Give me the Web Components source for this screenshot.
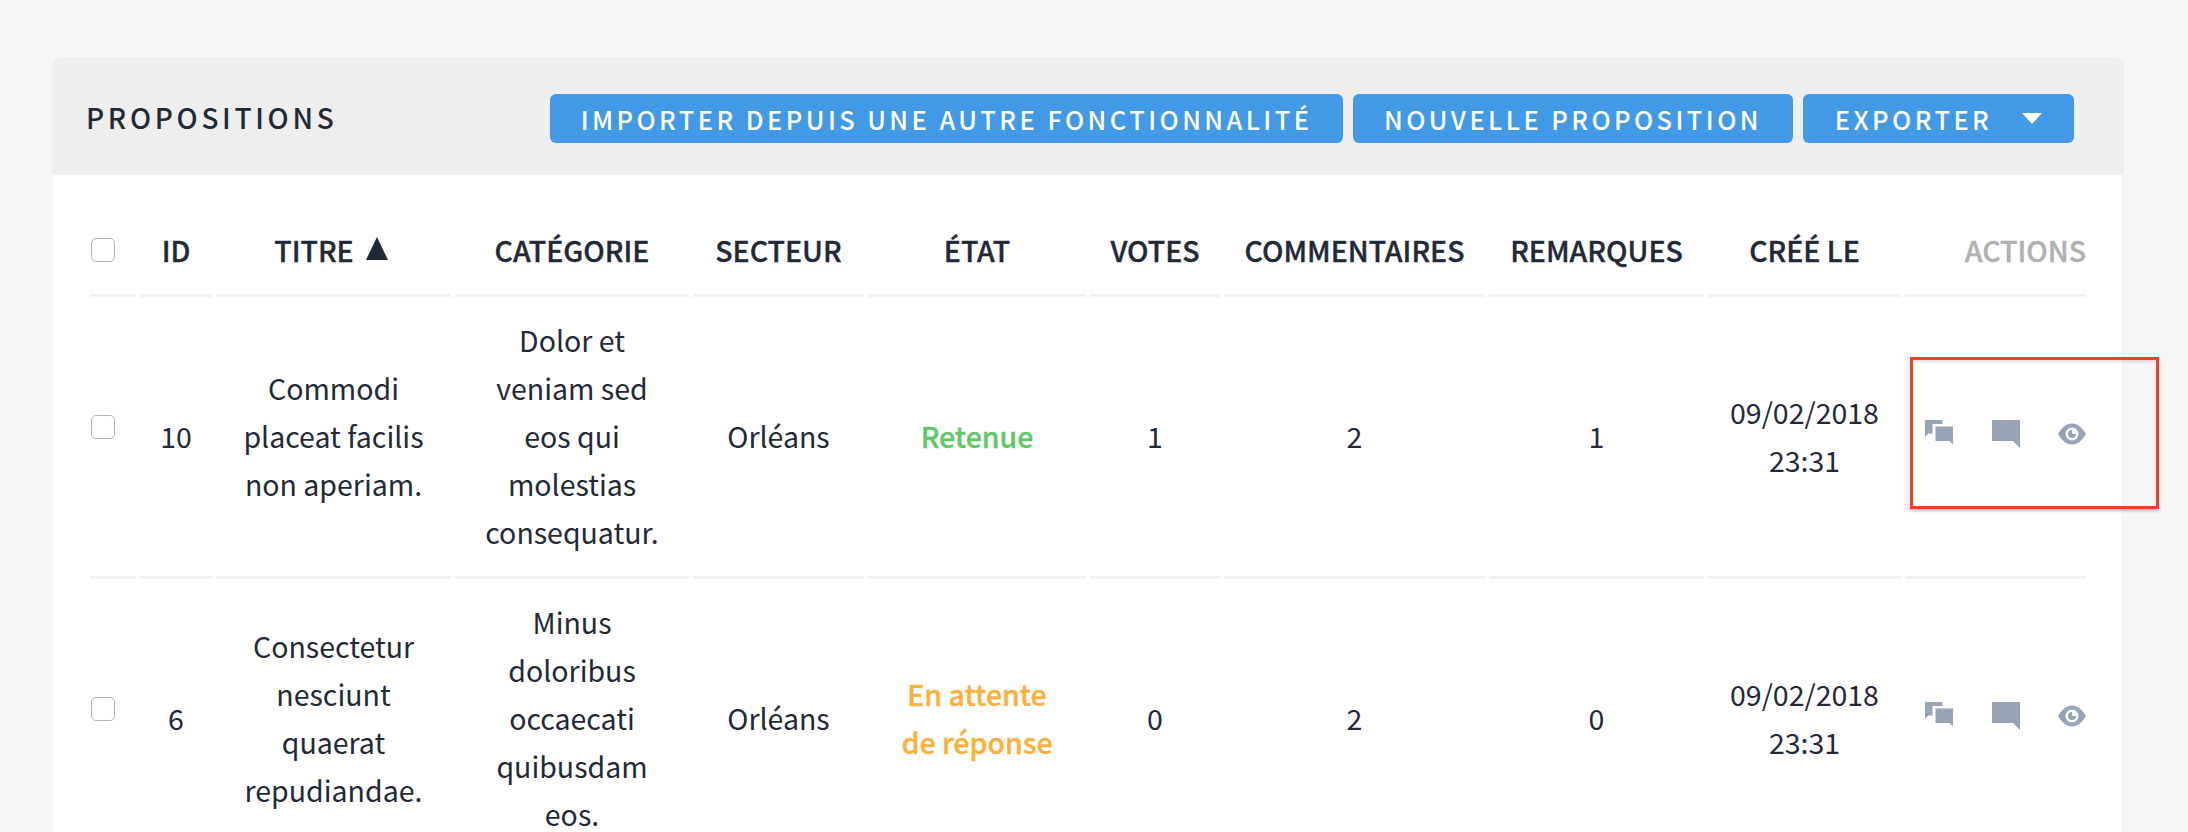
<!doctype html>
<html lang="fr">
<head>
<meta charset="utf-8">
<title>Propositions</title>
<style>
  html, body { margin: 0; height: 832px; overflow: hidden; background: #f6f6f6; }
  body { font-family: "Noto Sans CJK SC", "Source Sans Pro", "Noto Sans", sans-serif; color: #1f2937; }
</style>
</head>
<body>
<x-page>
  <x-card>
    <span slot="title">Propositions</span>
    <x-button slot="actions" style="width:793px">Importer depuis une autre fonctionnalité</x-button>
    <x-button slot="actions" style="width:440px">Nouvelle proposition</x-button>
    <x-button slot="actions" style="width:271px" caret>Exporter</x-button>
    <x-proposals-table></x-proposals-table>
  </x-card>
  <x-callout></x-callout>
</x-page>

<script>
class XPage extends HTMLElement {
  constructor() {
    super();
    this.attachShadow({ mode: 'open' }).innerHTML = `
      <style>
        :host { display: block; position: relative; height: 832px; padding: 58px 66px 0 53px; box-sizing: border-box; overflow: hidden; }
      </style>
      <slot></slot>`;
  }
}

class XCard extends HTMLElement {
  constructor() {
    super();
    this.attachShadow({ mode: 'open' }).innerHTML = `
      <style>
        :host { display: block; background: #fff; border-radius: 6px 6px 0 0; box-shadow: 0 0 0 1px #f2f2f2; height: 900px; }
        header { display: flex; align-items: center; justify-content: space-between; height: 117px; box-sizing: border-box;
                 background: #eee; border-radius: 6px 6px 0 0; padding: 4px 50px 0 33px; margin: 0 -2px 0 0; }
        h2 { margin: 0; font-size: 28px; line-height: 40px; font-weight: 500; letter-spacing: 3.7px; text-transform: uppercase; color: #1f2937; position: relative; top: -2px; }
        .actions { display: flex; gap: 10px; }
        main { padding: 20px 36px 0 37px; }
      </style>
      <header><h2><slot name="title"></slot></h2><div class="actions"><slot name="actions"></slot></div></header>
      <main><slot></slot></main>`;
  }
}

class XButton extends HTMLElement {
  constructor() {
    super();
    this.attachShadow({ mode: 'open' }).innerHTML = `
      <style>
        :host { display: flex; align-items: center; justify-content: center; height: 49px; box-sizing: border-box;
                background: #4299e6; color: #fff; border-radius: 6px; font-size: 25.5px; font-weight: 500; letter-spacing: 3.42px; text-transform: uppercase; white-space: nowrap; }
        .caret { display: none; width: 0; height: 0; margin-left: 30px; border: 10.5px solid transparent; border-top: 11px solid #fff; border-bottom: 0; }
        :host([caret]) .caret { display: block; }
      </style>
      <slot></slot><span class="caret"></span>`;
  }
}

class XIcon extends HTMLElement {
  connectedCallback() {
    const paths = {
      chats: '<path d="M0 0H17.500V4H7.500V13.500H3.500L0 17Z"/><path d="M10.500 6.500H28V24.500L24.500 21H10.500Z"/>',
      chat: '<path d="M0 0H28V28L21 21H0Z"/>',
      eye: '<path fill-rule="evenodd" d="M0 14C4 7.500 8.500 3.500 14 3.500S24 7.500 28 14C24 20.500 19.500 24.500 14 24.500S4 20.500 0 14ZM14 7.500A6.500 6.500 0 1 0 14 20.500A6.500 6.500 0 1 0 14 7.500Z"/><path fill-rule="evenodd" d="M14 10A4 4 0 1 0 18 14H15.500A1.500 1.500 0 0 1 14 12.500Z"/>'
    };
    const name = this.getAttribute('name');
    this.attachShadow({ mode: 'open' }).innerHTML = `
      <style>:host { display: block; width: 28px; height: 28px; } svg { display: block; fill: #98a4b5; }</style>
      <svg width="28" height="28" viewBox="0 0 28 28">${paths[name]}</svg>`;
  }
}

class XCheckbox extends HTMLElement {
  constructor() {
    super();
    this.attachShadow({ mode: 'open' }).innerHTML = `
      <style>:host { display: block; width: 24px; height: 24px; box-sizing: border-box; background: #fff; border: 1.5px solid #b4b4b4; border-radius: 5px; margin-left: 1px; }</style>`;
  }
}

class XProposalsTable extends HTMLElement {
  connectedCallback() {
    const rows = [
      { id: '10', title: ['Commodi', 'placeat facilis', 'non aperiam.'], cat: ['Dolor et', 'veniam sed', 'eos qui', 'molestias', 'consequatur.'],
        state: ['Retenue'], tone: 'ok', votes: 1, comments: 2, notes: 1 },
      { id: '6', title: ['Consectetur', 'nesciunt', 'quaerat', 'repudiandae.'], cat: ['Minus', 'doloribus', 'occaecati', 'quibusdam', 'eos.'],
        state: ['En attente', 'de réponse'], tone: 'wait', votes: 0, comments: 2, notes: 0 }
    ];
    const lines = l => l.join('<br>');
    this.attachShadow({ mode: 'open' }).innerHTML = `
      <style>
        :host { display: block; }
        .grid { display: grid; grid-template-columns: 46px 72px 235px 234px 171px 218px 130px 261px 215px 193px 181px; column-gap: 4px; font-size: 28.5px; line-height: 48px; text-align: center; color: #1f2937; }
        .th, .td { display: flex; align-items: center; justify-content: center; border-bottom: 3px solid #f2f2f2; box-sizing: border-box; }
        .th { height: 102px; font-weight: 500; -webkit-text-stroke: .35px currentColor; padding-top: 10px; white-space: nowrap; }
        .td { height: 282px; padding-bottom: 2px; }
        .check { justify-content: flex-start; }
        .td.check { padding-bottom: 20px; }
        .th.muted { color: #b0b0b0; justify-content: flex-end; }
        .ok { color: #5fc967; font-weight: 500; -webkit-text-stroke: .35px currentColor; }
        .wait { color: #fbb03b; font-weight: 500; -webkit-text-stroke: .35px currentColor; }
        .th.sorted { padding-right: 5px; }
        .sort { display: inline-block; width: 0; height: 0; margin: -2px 0 0 12px; border: 11.500px solid transparent; border-bottom: 23px solid #1f2937; border-top: 0; }
        .td.icons { justify-content: flex-start; gap: 38.500px; padding: 0 0 5px 20px; }
      </style>
      <div class="grid">
        <div class="th check"><x-checkbox></x-checkbox></div>
        <div class="th">ID</div>
        <div class="th sorted">TITRE<span class="sort"></span></div>
        <div class="th">CATÉGORIE</div>
        <div class="th">SECTEUR</div>
        <div class="th">ÉTAT</div>
        <div class="th">VOTES</div>
        <div class="th">COMMENTAIRES</div>
        <div class="th">REMARQUES</div>
        <div class="th">CRÉÉ LE</div>
        <div class="th muted">ACTIONS</div>
        ${rows.map(r => `
          <div class="td check"><x-checkbox></x-checkbox></div>
          <div class="td">${r.id}</div>
          <div class="td">${lines(r.title)}</div>
          <div class="td">${lines(r.cat)}</div>
          <div class="td">Orléans</div>
          <div class="td ${r.tone}">${lines(r.state)}</div>
          <div class="td">${r.votes}</div>
          <div class="td">${r.comments}</div>
          <div class="td">${r.notes}</div>
          <div class="td">09/02/2018<br>23:31</div>
          <div class="td icons"><x-icon name="chats"></x-icon><x-icon name="chat"></x-icon><x-icon name="eye"></x-icon></div>
        `).join('')}
      </div>`;
  }
}

// annotation drawn over the screenshot
class XCallout extends HTMLElement {
  constructor() {
    super();
    this.attachShadow({ mode: 'open' }).innerHTML = `
      <style>:host { position: absolute; left: 1910px; top: 357px; width: 249px; height: 152px; box-sizing: border-box; border: 3px solid #ee4123; box-shadow: 0 2px 3px rgba(0,0,0,.25), inset 0 2px 3px rgba(0,0,0,.12); }</style>`;
  }
}

customElements.define('x-page', XPage);
customElements.define('x-card', XCard);
customElements.define('x-button', XButton);
customElements.define('x-icon', XIcon);
customElements.define('x-checkbox', XCheckbox);
customElements.define('x-proposals-table', XProposalsTable);
customElements.define('x-callout', XCallout);
</script>
</body>
</html>
